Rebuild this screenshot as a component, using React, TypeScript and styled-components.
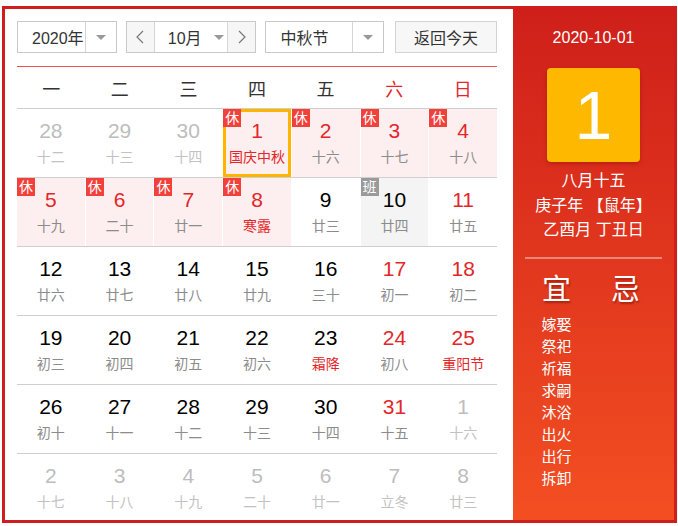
import React, { FunctionComponent } from 'react';
import styled, { createGlobalStyle, css } from 'styled-components';

const FONT = `"Liberation Sans", "Noto Sans CJK SC", sans-serif`;
const RED = '#e3262a';

const GlobalStyle = createGlobalStyle`
  body {
    margin: 0;
    background: #fff;
    font-family: ${FONT};
  }
`;

type Kind = 'other' | 'normal' | 'weekend' | 'holiday' | 'work';

type Day = {
  n: number;
  lunar: string;
  kind: Kind;
  fest?: boolean;
  selected?: boolean;
};

const d = (n: number, lunar: string, kind: Kind, fest = false, selected = false): Day => ({
  n, lunar, kind, fest, selected,
});

const weeks: Day[][] = [
  [d(28, '十二', 'other'), d(29, '十三', 'other'), d(30, '十四', 'other'), d(1, '国庆中秋', 'holiday', true, true), d(2, '十六', 'holiday'), d(3, '十七', 'holiday'), d(4, '十八', 'holiday')],
  [d(5, '十九', 'holiday'), d(6, '二十', 'holiday'), d(7, '廿一', 'holiday'), d(8, '寒露', 'holiday', true), d(9, '廿三', 'normal'), d(10, '廿四', 'work'), d(11, '廿五', 'weekend')],
  [d(12, '廿六', 'normal'), d(13, '廿七', 'normal'), d(14, '廿八', 'normal'), d(15, '廿九', 'normal'), d(16, '三十', 'normal'), d(17, '初一', 'weekend'), d(18, '初二', 'weekend')],
  [d(19, '初三', 'normal'), d(20, '初四', 'normal'), d(21, '初五', 'normal'), d(22, '初六', 'normal'), d(23, '霜降', 'normal', true), d(24, '初八', 'weekend'), d(25, '重阳节', 'weekend', true)],
  [d(26, '初十', 'normal'), d(27, '十一', 'normal'), d(28, '十二', 'normal'), d(29, '十三', 'normal'), d(30, '十四', 'normal'), d(31, '十五', 'weekend'), d(1, '十六', 'other')],
  [d(2, '十七', 'other'), d(3, '十八', 'other'), d(4, '十九', 'other'), d(5, '二十', 'other'), d(6, '廿一', 'other'), d(7, '立冬', 'other'), d(8, '廿三', 'other')],
];

const weekdays = ['一', '二', '三', '四', '五', '六', '日'];
const good = ['嫁娶', '祭祀', '祈福', '求嗣', '沐浴', '出火', '出行', '拆卸'];

const Frame = styled.div`
  box-sizing: border-box;
  margin: 6px 0 0 2px;
  width: 675px;
  height: 517px;
  border: 3px solid #d01d1d;
  display: flex;
  overflow: hidden;
`;

const Main = styled.div`
  width: 508px;
  box-sizing: border-box;
  padding: 12px 16px 0 12px;
  overflow: hidden;
`;

const Toolbar = styled.div`
  display: flex;
  height: 32px;
`;

const Box = styled.div<{ $w: number; $ml?: number }>`
  box-sizing: border-box;
  width: ${p => p.$w}px;
  margin-left: ${p => p.$ml || 0}px;
  height: 32px;
  border: 1px solid #c9c9c9;
  display: flex;
  background: #fff;
  font-size: 16px;
  color: #333;
`;

const SelectText = styled.div`
  flex: 1;
  display: flex;
  align-items: center;
  padding-left: 14px;
`;

const ArrowPart = styled.div`
  width: 30px;
  border-left: 1px solid #d6d6d6;
  display: flex;
  align-items: center;
  justify-content: center;
`;

const Caret = styled.span`
  width: 0;
  height: 0;
  border-left: 5px solid transparent;
  border-right: 5px solid transparent;
  border-top: 5px solid #999;
`;

const NavBtn = styled.div<{ $side: 'left' | 'right' }>`
  width: 27px;
  background: #f6f6f6;
  display: flex;
  align-items: center;
  justify-content: center;
  ${p => (p.$side === 'left' ? 'border-right' : 'border-left')}: 1px solid #d6d6d6;
`;

const MonthText = styled.div`
  flex: 1;
  display: flex;
  align-items: center;
  padding-left: 13px;
  gap: 12px;
`;

const TodayBtn = styled(Box)`
  background: #f7f7f7;
  border-color: #d4d4d4;
  justify-content: center;
  align-items: center;
`;

const RedLine = styled.div`
  height: 1px;
  background: #f2534f;
  margin-top: 13px;
`;

const HeadRow = styled.div`
  display: grid;
  grid-template-columns: repeat(7, 1fr);
  height: 41px;
  border-bottom: 1px solid #cfcfcf;
`;

const HeadCell = styled.div<{ $red: boolean }>`
  display: flex;
  align-items: center;
  justify-content: center;
  font-size: 18px;
  color: ${p => (p.$red ? RED : '#333')};
`;

const WeekRow = styled.div`
  display: grid;
  grid-template-columns: repeat(7, 1fr);
  column-gap: 1px;
  height: 68px;
  border-bottom: 1px solid #cfcfcf;
`;

const Cell = styled.div<{ $kind: Kind; $selected: boolean }>`
  position: relative;
  display: flex;
  flex-direction: column;
  align-items: center;
  padding-top: 9px;
  box-sizing: border-box;
  background: ${p => (p.$kind === 'holiday' ? '#fdefef' : p.$kind === 'work' ? '#f4f4f4' : '#fff')};
  ${p => p.$selected && css`box-shadow: inset 0 0 0 3px #ffb400;`}
`;

const Num = styled.div<{ $kind: Kind }>`
  font-size: 21px;
  line-height: 26px;
  color: ${p => {
    if (p.$kind === 'other') return '#bdbdbd';
    if (p.$kind === 'holiday' || p.$kind === 'weekend') return RED;
    return '#000';
  }};
`;

const Lunar = styled.div<{ $kind: Kind; $fest: boolean }>`
  font-size: 14px;
  line-height: 20px;
  margin-top: 3px;
  white-space: nowrap;
  color: ${p => (p.$kind === 'other' ? '#c2c2c2' : p.$fest ? RED : '#8c8c8c')};
`;

const Tag = styled.span<{ $work: boolean }>`
  position: absolute;
  left: 0;
  top: 0;
  width: 18px;
  height: 18px;
  line-height: 18px;
  text-align: center;
  font-size: 14px;
  color: #fff;
  background: ${p => (p.$work ? '#9a9a9a' : '#f2403a')};
`;

const Side = styled.div`
  flex: 1;
  background: linear-gradient(180deg, #cf1f1a 0%, #f34f22 100%);
  color: #fff;
  display: flex;
  flex-direction: column;
  align-items: center;
  padding-top: 19px;
`;

const DateText = styled.div`
  font-size: 16px;
  line-height: 20px;
`;

const BigDay = styled.div`
  margin-top: 20px;
  width: 93px;
  height: 94px;
  background: #ffb800;
  border-radius: 4px;
  box-shadow: 0 2px 4px rgba(120, 0, 0, 0.35);
  display: flex;
  align-items: center;
  justify-content: center;
  font-size: 68px;
  line-height: 1;
`;

const LunarInfo = styled.div`
  margin-top: 7px;
  font-size: 16px;
  line-height: 24.5px;
  text-align: center;
  white-space: pre;
`;

const Divider = styled.div`
  margin-top: 14px;
  width: 137px;
  height: 2px;
  background: rgba(255, 255, 255, 0.4);
`;

const Columns = styled.div`
  display: flex;
  gap: 37px;
  margin-top: 16px;
  margin-left: -5px;
`;

const Col = styled.div`
  width: 32px;
  display: flex;
  flex-direction: column;
  align-items: center;
`;

const ColHead = styled.div`
  font-size: 29px;
  line-height: 30px;
  text-shadow: 1px 2px 2px rgba(90, 0, 0, 0.45);
  margin-bottom: 9px;
`;

const Item = styled.div`
  font-size: 15px;
  line-height: 22px;
  white-space: nowrap;
`;

const Chevron: FunctionComponent<{ dir: 'left' | 'right' }> = ({ dir }) => (
  <svg width="8" height="14" viewBox="0 0 8 14">
    <polyline
      points={dir === 'left' ? '7,1 1,7 7,13' : '1,1 7,7 1,13'}
      fill="none"
      stroke="#777"
      strokeWidth="1.2"
    />
  </svg>
);

const App: FunctionComponent = () => (
  <>
    <GlobalStyle />
    <Frame>
      <Main>
        <Toolbar>
          <Box $w={100}>
            <SelectText>2020年</SelectText>
            <ArrowPart><Caret /></ArrowPart>
          </Box>
          <Box $w={131} $ml={9}>
            <NavBtn $side="left"><Chevron dir="left" /></NavBtn>
            <MonthText>10月<Caret /></MonthText>
            <NavBtn $side="right"><Chevron dir="right" /></NavBtn>
          </Box>
          <Box $w={119} $ml={9}>
            <SelectText>中秋节</SelectText>
            <ArrowPart><Caret /></ArrowPart>
          </Box>
          <TodayBtn $w={102} $ml={11}>返回今天</TodayBtn>
        </Toolbar>
        <RedLine />
        <HeadRow>
          {weekdays.map((w, i) => (
            <HeadCell key={w} $red={i >= 5}>{w}</HeadCell>
          ))}
        </HeadRow>
        {weeks.map((week, wi) => (
          <WeekRow key={wi}>
            {week.map((day, di) => (
              <Cell key={di} $kind={day.kind} $selected={!!day.selected}>
                {(day.kind === 'holiday' || day.kind === 'work') && (
                  <Tag $work={day.kind === 'work'}>{day.kind === 'work' ? '班' : '休'}</Tag>
                )}
                <Num $kind={day.kind}>{day.n}</Num>
                <Lunar $kind={day.kind} $fest={!!day.fest}>{day.lunar}</Lunar>
              </Cell>
            ))}
          </WeekRow>
        ))}
      </Main>
      <Side>
        <DateText>2020-10-01</DateText>
        <BigDay>1</BigDay>
        <LunarInfo>{'八月十五\n庚子年 【鼠年】\n乙酉月 丁丑日'}</LunarInfo>
        <Divider />
        <Columns>
          <Col>
            <ColHead>宜</ColHead>
            {good.map(g => <Item key={g}>{g}</Item>)}
          </Col>
          <Col>
            <ColHead>忌</ColHead>
          </Col>
        </Columns>
      </Side>
    </Frame>
  </>
);

export default App;
